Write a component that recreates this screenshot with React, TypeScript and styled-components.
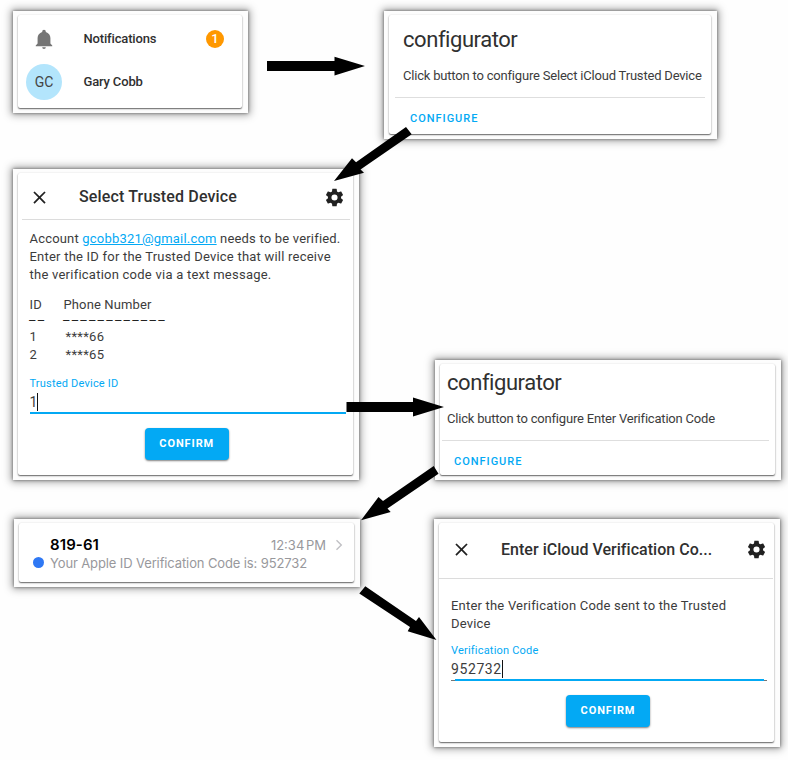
import React from "react";
import styled, { createGlobalStyle } from "styled-components";

const GlobalStyle = createGlobalStyle`
  * { box-sizing: border-box; }
  body { margin: 0; background: #fefefe; }
`;

const Canvas = styled.main`
  position: relative;
  width: 788px;
  height: 760px;
  overflow: hidden;
  background: #fefefe;
  font-family: Roboto, "Liberation Sans", sans-serif;
  color: #303030;
`;

/* A screenshot pinned on the diagram canvas */
const Frame = styled.section<{ $x: number; $y: number; $w: number; $h: number }>`
  position: absolute;
  left: ${(p) => p.$x}px;
  top: ${(p) => p.$y}px;
  width: ${(p) => p.$w}px;
  height: ${(p) => p.$h}px;
  padding: 4px 6px 5px 5px;
  display: flex;
  background: #fdfdfd;
  box-shadow: 0 0 3px rgba(0, 0, 0, 0.5), 0 0 8px 2px rgba(0, 0, 0, 0.36);
`;

const Sheet = styled.div`
  flex: 1;
  min-width: 0;
  display: flex;
  flex-direction: column;
  background: #fff;
  border-radius: 2px;
  box-shadow: 0 1px 1.5px rgba(0, 0, 0, 0.6), 0 0 2px rgba(0, 0, 0, 0.08);
`;

const MenuRow = styled.div<{ $h: number }>`
  display: grid;
  grid-template-columns: 57.5px 1fr 18px;
  align-items: center;
  height: ${(p) => p.$h}px;
  padding: 0 18px 0 8px;
`;

const MenuIcon = styled.div`
  width: 36px;
  height: 36px;
  display: flex;
  align-items: center;
  justify-content: center;
`;

const Avatar = styled(MenuIcon)`
  border-radius: 50%;
  background: #b3e5fc;
  font-size: 14px;
  color: #444;
`;

const MenuLabel = styled.span`
  font-size: 13px;
  font-weight: 500;
  line-height: 18px;
  letter-spacing: -0.16px;
  white-space: nowrap;
`;

const Badge = styled.span`
  width: 18px;
  height: 18px;
  border-radius: 50%;
  background: #ff9800;
  color: #fff;
  font-size: 13px;
  font-weight: 500;
  line-height: 18px;
  text-align: center;
`;

const CardTitle = styled.h2`
  margin: 0;
  font-size: 22px;
  font-weight: 400;
  line-height: 28px;
  letter-spacing: -0.44px;
`;

const CardText = styled.p`
  margin: 13px 0 0;
  font-size: 13px;
  line-height: 18px;
  letter-spacing: -0.195px;
  color: #3c3c3c;
  white-space: nowrap;
`;

const CardBody = styled.div<{ $top: number; $left: number }>`
  padding: ${(p) => p.$top}px 0 12px ${(p) => p.$left}px;
`;

const CardFooter = styled.footer<{ $left: number; $indent: number }>`
  margin: 0 6px 0 ${(p) => p.$left}px;
  border-top: 1px solid #dedede;
  padding: 12px 0 0 ${(p) => p.$indent}px;
`;

const TextButton = styled.button`
  display: block;
  border: 0;
  padding: 0;
  background: none;
  font: 500 11px/18px Roboto, sans-serif;
  letter-spacing: 0.98px;
  color: #03a9f4;
`;

const DialogHeader = styled.header<{ $h: number; $pad: string; $margin: string }>`
  display: grid;
  grid-template-columns: 50px 1fr 21px;
  align-items: center;
  height: ${(p) => p.$h}px;
  margin: ${(p) => p.$margin};
  padding: ${(p) => p.$pad};
  border-bottom: 1px solid #dcdcdc;
`;

const DialogTitle = styled.h3<{ $ls: number }>`
  margin: 0;
  font-size: 16px;
  font-weight: 500;
  line-height: 20px;
  letter-spacing: ${(p) => p.$ls}px;
  white-space: nowrap;
`;

const DialogBody = styled.div<{ $top: number; $left: number }>`
  display: flex;
  flex-direction: column;
  padding: ${(p) => p.$top}px 7px 0 ${(p) => p.$left}px;
`;

const Line = styled.p<{ $ls: number }>`
  margin: 0;
  font-size: 13px;
  line-height: 18px;
  letter-spacing: ${(p) => p.$ls}px;
  color: #3c3c3c;
  white-space: nowrap;
`;

const Mail = styled.a`
  color: #03a9f4;
  text-decoration: underline;
`;

const DeviceList = styled.div`
  display: grid;
  grid-template-columns: 34px 1fr;
  grid-template-rows: 18px 14px 18px 18px;
  margin-top: 12px;
  font-size: 13px;
  line-height: 18px;
  letter-spacing: 0.12px;
  color: #3c3c3c;
`;

const Dashes = styled.span`
  line-height: 14px;
  letter-spacing: 0.12px;
  margin-left: -1.5px;
  color: #222;
  white-space: nowrap;
`;

const Masked = styled.span`
  margin-left: 2px;
  letter-spacing: 0.3px;
`;

const Field = styled.div<{ $top: number }>`
  margin-top: ${(p) => p.$top}px;
  display: flex;
  flex-direction: column;
`;

const FieldLabel = styled.label`
  font-size: 11px;
  line-height: 14px;
  letter-spacing: 0.2px;
  color: #03a9f4;
`;

const FieldValue = styled.div<{ $ls: number; $edge?: boolean }>`
  display: flex;
  align-items: center;
  height: 23px;
  padding-bottom: 2px;
  font-size: 14px;
  line-height: 20px;
  letter-spacing: ${(p) => p.$ls}px;
  color: #3c3c3c;
  background:
    linear-gradient(#03a9f4, #03a9f4) center bottom / ${(p) => (p.$edge ? "calc(100% - 7px)" : "100%")} 2px no-repeat,
    linear-gradient(#777, #777) center bottom / 100% ${(p) => (p.$edge ? 1 : 0)}px no-repeat;
`;

const Caret = styled.i`
  width: 1px;
  height: 18px;
  background: #111;
`;

const ConfirmButton = styled.button`
  align-self: center;
  width: 84px;
  height: 32px;
  margin: 14px 2px 0 0;
  padding: 0 0 1px 0;
  border: 0;
  border-radius: 4px;
  background: #03a9f4;
  color: #fff;
  font: 700 11px/16px Roboto, sans-serif;
  letter-spacing: 0.9px;
  box-shadow: 0 1px 2px rgba(0, 0, 0, 0.5);
`;

const Message = styled.article`
  display: grid;
  grid-template-columns: 17px 1fr auto 17px;
  grid-template-rows: 19px 18px;
  align-items: center;
  padding: 12px 11px 0 14px;
  font-family: Inter, "Liberation Sans", sans-serif;
  font-size: 13px;
  letter-spacing: -0.12px;
  color: #98989c;
  white-space: nowrap;
`;

const Sender = styled.strong`
  grid-column: 2;
  font-size: 15px;
  font-weight: 600;
  letter-spacing: 0.1px;
  color: #000;
`;

const Time = styled.time`
  font-size: 13px;
  letter-spacing: 0;
  word-spacing: -2px;
`;

const Unread = styled.i`
  grid-row: 2;
  width: 11px;
  height: 11px;
  margin-top: -1px;
  border-radius: 50%;
  background: #2f78f4;
`;

const Preview = styled.span`
  grid-column: 2 / -1;
`;

const Chevron = styled.svg`
  justify-self: end;
`;

const Arrows = styled.svg`
  position: absolute;
  inset: 0;
`;

const BellIcon = () => (
  <svg width="22" height="22" viewBox="0 0 24 24" fill="#757575">
    <path d="M21 19v1H3v-1l2-2v-6c0-3.1 2.03-5.83 5-6.71V4a2 2 0 0 1 4 0v.29c2.97.88 5 3.61 5 6.71v6l2 2m-7 2a2 2 0 0 1-4 0" />
  </svg>
);

const CloseIcon = () => (
  <svg width="21" height="21" viewBox="0 0 24 24" fill="#212121">
    <path d="M19 6.41 17.59 5 12 10.59 6.41 5 5 6.41 10.59 12 5 17.59 6.41 19 12 13.41 17.59 19 19 17.59 13.41 12z" />
  </svg>
);

const CogIcon = () => (
  <svg width="21" height="21" viewBox="0 0 24 24" fill="#212121">
    <path d="M12 15.5A3.5 3.5 0 0 1 8.5 12 3.5 3.5 0 0 1 12 8.5a3.5 3.5 0 0 1 3.5 3.5 3.5 3.5 0 0 1-3.5 3.5m7.43-2.53c.04-.32.07-.64.07-.97s-.03-.66-.07-1l2.11-1.63c.19-.15.24-.42.12-.64l-2-3.46c-.12-.22-.39-.31-.61-.22l-2.49 1c-.52-.39-1.06-.73-1.69-.98l-.37-2.65A.506.506 0 0 0 14 2h-4c-.25 0-.46.18-.5.42l-.37 2.65c-.63.25-1.17.59-1.69.98l-2.49-1c-.22-.09-.49 0-.61.22l-2 3.46c-.13.22-.07.49.12.64L4.57 11c-.04.34-.07.67-.07 1s.03.65.07.97l-2.11 1.66c-.19.15-.25.42-.12.64l2 3.46c.12.22.39.3.61.22l2.49-1.01c.52.4 1.06.74 1.69.99l.37 2.65c.04.24.25.42.5.42h4c.25 0 .46-.18.5-.42l.37-2.65c.63-.26 1.17-.59 1.69-.99l2.49 1.01c.22.08.49 0 .61-.22l2-3.46c.12-.22.07-.49-.12-.64z" />
  </svg>
);

const ARROWS = [
  "267,61 334.5,61 334.5,56.7 365,66 334.5,75.5 334.5,71 267,71",
  "406,127 411.7,134.3 360.5,169.5 364,172.7 334,181 352,158.3 356,162.3",
  "346.5,402 413,402 413,397.5 444,407 413,416.5 413,412 346.5,412",
  "433.7,466 438.5,473.7 387.5,508.5 390.7,512 361,520.3 378.5,497 383,501",
  "365.3,586.3 416,621 419,617 436.5,640 407.7,631.3 410,627 359.3,593.5",
];

interface ConfiguratorProps {
  text: string;
  top: number;
  left: number;
  ruleLeft: number;
  indent: number;
}

function ConfiguratorCard({ text, top, left, ruleLeft, indent }: ConfiguratorProps) {
  return (
    <Sheet>
      <CardBody $top={top} $left={left}>
        <CardTitle>configurator</CardTitle>
        <CardText>{text}</CardText>
      </CardBody>
      <CardFooter $left={ruleLeft} $indent={indent}>
        <TextButton>CONFIGURE</TextButton>
      </CardFooter>
    </Sheet>
  );
}

export default function App() {
  return (
    <Canvas>
      <GlobalStyle />

      <Frame $x={13} $y={11} $w={235} $h={102}>
        <Sheet>
          <MenuRow $h={48}>
            <MenuIcon><BellIcon /></MenuIcon>
            <MenuLabel>Notifications</MenuLabel>
            <Badge>1</Badge>
          </MenuRow>
          <MenuRow $h={38}>
            <Avatar>GC</Avatar>
            <MenuLabel>Gary Cobb</MenuLabel>
          </MenuRow>
        </Sheet>
      </Frame>

      <Frame $x={384} $y={11} $w={333} $h={128}>
        <ConfiguratorCard
          text="Click button to configure Select iCloud Trusted Device"
          top={11}
          left={14}
          ruleLeft={6}
          indent={15}
        />
      </Frame>

      <Frame $x={13} $y={169} $w={346} $h={311}>
        <Sheet>
          <DialogHeader $h={47} $margin="0 3px 0 4px" $pad="2px 5px 0 7px">
            <CloseIcon />
            <DialogTitle $ls={0.15}>Select Trusted Device</DialogTitle>
            <CogIcon />
          </DialogHeader>
          <DialogBody $top={10} $left={11.5}>
            <Line $ls={0.19}>Account <Mail>gcobb321@gmail.com</Mail> needs to be verified.</Line>
            <Line $ls={0.22}>Enter the ID for the Trusted Device that will receive</Line>
            <Line $ls={0.24}>the verification code via a text message.</Line>
            <DeviceList>
              <span>ID</span><span>Phone Number</span>
              <Dashes>––</Dashes><Dashes>––––––––––––</Dashes>
              <span>1</span><Masked>****66</Masked>
              <span>2</span><Masked>****65</Masked>
            </DeviceList>
            <Field $top={13}>
              <FieldLabel>Trusted Device ID</FieldLabel>
              <FieldValue $ls={0}>1<Caret /></FieldValue>
            </Field>
            <ConfirmButton>CONFIRM</ConfirmButton>
          </DialogBody>
        </Sheet>
      </Frame>

      <Frame $x={435} $y={360} $w={346} $h={120}>
        <ConfiguratorCard
          text="Click button to configure Enter Verification Code"
          top={5}
          left={7}
          ruleLeft={2}
          indent={12}
        />
      </Frame>

      <Frame $x={14} $y={519} $w={346} $h={68}>
        <Sheet>
          <Message>
            <Sender>819-61</Sender>
            <Time>12:34 PM</Time>
            <Chevron width="8" height="12" viewBox="0 0 8 12" fill="none" stroke="#c0c0c4" strokeWidth="1.4">
              <path d="M1.5 1.3 6.3 6 1.5 10.7" />
            </Chevron>
            <Unread />
            <Preview>Your Apple ID Verification Code is: 952732</Preview>
          </Message>
        </Sheet>
      </Frame>

      <Frame $x={434} $y={519} $w={346} $h={228}>
        <Sheet>
          <DialogHeader $h={56} $margin="0 1px 0 0" $pad="0 6px 2px 12px">
            <CloseIcon />
            <DialogTitle $ls={0.03}>Enter iCloud Verification Co...</DialogTitle>
            <CogIcon />
          </DialogHeader>
          <DialogBody $top={18} $left={12}>
            <Line $ls={0.2}>Enter the Verification Code sent to the Trusted</Line>
            <Line $ls={0.2}>Device</Line>
            <Field $top={11}>
              <FieldLabel>Verification Code</FieldLabel>
              <FieldValue $ls={0.6} $edge>952732<Caret /></FieldValue>
            </Field>
            <ConfirmButton>CONFIRM</ConfirmButton>
          </DialogBody>
        </Sheet>
      </Frame>

      <Arrows width="788" height="760" viewBox="0 0 788 760">
        {ARROWS.map((points) => (
          <polygon key={points} points={points} fill="#000" />
        ))}
      </Arrows>
    </Canvas>
  );
}
